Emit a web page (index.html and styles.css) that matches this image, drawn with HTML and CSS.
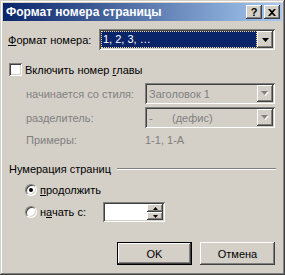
FILE: index.html
```html
<!DOCTYPE html>
<html lang="ru">
<head>
    <meta charset="UTF-8">
    <title>Формат номера страницы</title>
    <link rel="stylesheet" href="styles.css">
</head>
<body>
    <div class="window">
        <div class="titlebar">
            <span class="title">Формат номера страницы</span>
            <div class="title-buttons">
                <div class="tbtn raised">?</div>
                <div class="tbtn raised">
                    <svg width="8" height="7" viewBox="0 0 8 7"><path d="M0 0h2l2 2 2-2h2L5 3.5 8 7H6L4 5 2 7H0l3-3.5z" fill="#000"/></svg>
                </div>
            </div>
        </div>
        <div class="content">
            <div class="row row-format">
                <span class="label label-main"><u>Ф</u>ормат номера:</span>
                <div class="combo sunken combo-main">
                    <div class="combo-field"><span class="selection">1, 2, 3, …</span></div>
                    <div class="drop raised">
                        <svg width="7" height="4" viewBox="0 0 7 4"><path d="M0 0h7L3.5 4z" fill="#000"/></svg>
                    </div>
                </div>
            </div>

            <div class="row row-check">
                <span class="checkbox"></span>
                <span class="label">Включить номер <u>г</u>лавы</span>
            </div>

            <div class="row row-sub row-style">
                <span class="label label-sub disabled">начинается со стиля:</span>
                <div class="combo sunken combo-sub">
                    <div class="combo-field off">Заголовок 1</div>
                    <div class="drop raised">
                        <svg width="8" height="5" viewBox="0 0 8 5"><path d="M1 1h7L4.5 5z" fill="#fff"/><path d="M0 0h7L3.5 4z" fill="#808080"/></svg>
                    </div>
                </div>
            </div>

            <div class="row row-sub row-sep">
                <span class="label label-sub disabled">разделитель:</span>
                <div class="combo sunken combo-sub">
                    <div class="combo-field off"><span class="dash">-</span>(дефис)</div>
                    <div class="drop raised">
                        <svg width="8" height="5" viewBox="0 0 8 5"><path d="M1 1h7L4.5 5z" fill="#fff"/><path d="M0 0h7L3.5 4z" fill="#808080"/></svg>
                    </div>
                </div>
            </div>

            <div class="row row-sub row-examples">
                <span class="label label-sub disabled">Примеры:</span>
                <span class="label disabled">1-1, 1-A</span>
            </div>

            <div class="group-head">
                <span class="label">Нумерация страниц</span>
                <span class="etched"></span>
            </div>

            <div class="row row-radio first">
                <span class="radio checked"></span>
                <span class="label"><u>п</u>родолжить</span>
            </div>

            <div class="row row-radio second">
                <span class="radio"></span>
                <span class="label label-start">н<u>а</u>чать с:</span>
                <div class="spin sunken">
                    <div class="spin-field"></div>
                    <div class="spin-buttons">
                        <div class="spin-btn raised">
                            <svg width="5" height="3" viewBox="0 0 5 3"><path d="M2.5 0L5 3H0z" fill="#000"/></svg>
                        </div>
                        <div class="spin-btn raised">
                            <svg width="5" height="3" viewBox="0 0 5 3"><path d="M0 0h5L2.5 3z" fill="#000"/></svg>
                        </div>
                    </div>
                </div>
            </div>

            <div class="actions">
                <div class="button default">OK</div>
                <div class="button raised">Отмена</div>
            </div>
        </div>
    </div>
</body>
</html>
```

FILE: styles.css
```css
body {
    margin: 0;
    padding: 0;
    background: #d4d0c8;
    font-family: "Liberation Sans", Arial, sans-serif;
    font-size: 11px;
    color: #000;
}
.window {
    width: 285px;
    height: 275px;
    box-sizing: border-box;
    padding: 3px;
    background: #d4d0c8;
    box-shadow: inset -1px -1px #404040, inset 1px 1px #d4d0c8, inset -2px -2px #808080, inset 2px 2px #fff;
}
.raised {
    background: #d4d0c8;
    box-shadow: inset -1px -1px #404040, inset 1px 1px #fff, inset -2px -2px #808080, inset 2px 2px #d4d0c8;
}
.sunken {
    box-shadow: inset 1px 1px #808080, inset -1px -1px #fff, inset 2px 2px #404040, inset -2px -2px #d4d0c8;
}
.titlebar {
    height: 18px;
    display: flex;
    align-items: center;
    justify-content: space-between;
    padding-left: 3px;
    background: linear-gradient(to right, #0a246a, #a6caf0);
}
.title {
    color: #fff;
    font-weight: bold;
    font-size: 12px;
}
.title-buttons {
    display: flex;
    gap: 2px;
    margin-right: 2px;
}
.tbtn {
    width: 16px;
    height: 14px;
    display: flex;
    align-items: center;
    justify-content: center;
    font-weight: bold;
    font-size: 11px;
    line-height: 14px;
}
.content {
    padding: 8px 7px 0 5px;
}
.row {
    display: flex;
    align-items: center;
}
.label {
    white-space: nowrap;
}
.disabled {
    color: #808080;
}
.row-format {
    height: 21px;
}
.label-main {
    width: 91px;
}
.combo {
    height: 21px;
    box-sizing: border-box;
    padding: 2px;
    display: flex;
    background: #fff;
}
.combo-main {
    width: 176px;
}
.combo-sub {
    width: 130px;
    background: #d4d0c8;
}
.combo-field {
    flex: 1;
    display: flex;
    align-items: center;
    padding-left: 2px;
}
.combo-main .combo-field {
    background: #0a246a;
    padding: 0;
}
.selection {
    flex: 1;
    height: 17px;
    box-sizing: border-box;
    border: 1px dotted #f5db95;
    color: #fff;
    padding-left: 1px;
    line-height: 15px;
}
.combo-field.off {
    color: #808080;
}
.dash {
    width: 23px;
}
.drop {
    width: 16px;
    height: 17px;
    display: flex;
    align-items: center;
    justify-content: center;
}
.row-check {
    height: 13px;
    margin-top: 13px;
    padding-left: 1px;
    gap: 3px;
}
.checkbox {
    width: 13px;
    height: 13px;
    box-sizing: border-box;
    background: #fff;
    box-shadow: inset 1px 1px #808080, inset -1px -1px #fff, inset 2px 2px #404040, inset -2px -2px #d4d0c8;
}
.row-sub {
    padding-left: 18px;
}
.label-sub {
    width: 119px;
}
.row-style {
    margin-top: 7px;
}
.row-sep {
    margin-top: 3px;
}
.row-examples {
    height: 18px;
    margin-top: 3px;
}
.group-head {
    display: flex;
    align-items: center;
    height: 14px;
    margin-top: 13px;
    padding-left: 1px;
    gap: 6px;
}
.etched {
    flex: 1;
    height: 1px;
    background: #808080;
    border-bottom: 1px solid #fff;
    margin-right: -1px;
}
.row-radio {
    padding-left: 17px;
    gap: 3px;
}
.row-radio.first {
    height: 13px;
    margin-top: 7px;
}
.row-radio.second {
    height: 20px;
    margin-top: 6px;
}
.radio {
    width: 12px;
    height: 12px;
    box-sizing: border-box;
    border-radius: 50%;
    background: #fff;
    border: 1px solid;
    border-color: #808080 #fff #fff #808080;
    box-shadow: inset 1px 1px #404040, inset -1px -1px #d4d0c8;
    display: flex;
    align-items: center;
    justify-content: center;
}
.radio.checked::after {
    content: "";
    width: 4px;
    height: 4px;
    border-radius: 50%;
    background: #000;
}
.label-start {
    width: 60px;
}
.spin {
    width: 62px;
    height: 20px;
    box-sizing: border-box;
    padding: 2px;
    display: flex;
    background: #fff;
}
.spin-field {
    flex: 1;
}
.spin-buttons {
    display: flex;
    flex-direction: column;
    width: 16px;
}
.spin-btn {
    flex: 1;
    display: flex;
    align-items: center;
    justify-content: center;
}
.actions {
    display: flex;
    justify-content: flex-end;
    gap: 8px;
    margin-top: 20px;
}
.button {
    width: 75px;
    height: 23px;
    box-sizing: border-box;
    display: flex;
    align-items: center;
    justify-content: center;
}
.button.default {
    background: #d4d0c8;
    border: 1px solid #000;
    box-shadow: inset -1px -1px #404040, inset 1px 1px #fff, inset -2px -2px #808080;
}
```
